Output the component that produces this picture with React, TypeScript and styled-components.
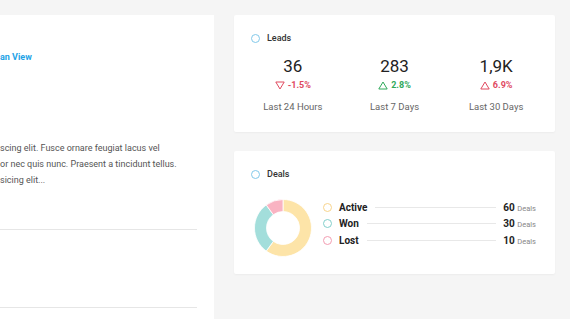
import styled, { createGlobalStyle } from "styled-components";

const GlobalStyle = createGlobalStyle`
  html, body {
    margin: 0;
    padding: 0;
    background: #f5f5f5;
    font-family: Roboto, "Liberation Sans", Arial, sans-serif;
    overflow: hidden;
  }
`;

type Trend = "up" | "down";

const leads = [
  { value: "36", change: "-1.5%", trend: "down" as Trend, color: "#e04a5f", label: "Last 24 Hours" },
  { value: "283", change: "2.8%", trend: "up" as Trend, color: "#2fa95a", label: "Last 7 Days" },
  { value: "1,9K", change: "6.9%", trend: "up" as Trend, color: "#e04a5f", label: "Last 30 Days" },
];

const deals = [
  { name: "Active", count: 60, fill: "#fde4a8", ring: "#f8d48c" },
  { name: "Won", count: 30, fill: "#a3dedb", ring: "#82cfcc" },
  { name: "Lost", count: 10, fill: "#f9b3c2", ring: "#f39db2" },
];

const polar = (cx: number, cy: number, r: number, deg: number) => {
  const a = ((deg - 90) * Math.PI) / 180;
  return [cx + r * Math.cos(a), cy + r * Math.sin(a)];
};

const arcPath = (start: number, end: number, ro: number, ri: number) => {
  const c = 30;
  const [x1, y1] = polar(c, c, ro, start);
  const [x2, y2] = polar(c, c, ro, end);
  const [x3, y3] = polar(c, c, ri, end);
  const [x4, y4] = polar(c, c, ri, start);
  const large = end - start > 180 ? 1 : 0;
  return `M${x1} ${y1} A${ro} ${ro} 0 ${large} 1 ${x2} ${y2} L${x3} ${y3} A${ri} ${ri} 0 ${large} 0 ${x4} ${y4} Z`;
};

const Donut = () => {
  const total = deals.reduce((s, d) => s + d.count, 0);
  let angle = 0;
  return (
    <svg width="60" height="60" viewBox="0 0 60 60">
      {deals.map((d) => {
        const start = angle;
        angle += (d.count / total) * 360;
        return (
          <path
            key={d.name}
            d={arcPath(start, angle, 28.5, 16.5)}
            fill={d.fill}
            stroke="#fff"
            strokeWidth="0.8"
          />
        );
      })}
    </svg>
  );
};

const TrendIcon = ({ trend, color }: { trend: Trend; color: string }) => (
  <svg width="10" height="9" viewBox="0 0 10 9">
    {trend === "up" ? (
      <path d="M5 1 L9.2 8 L0.8 8 Z" fill="none" stroke={color} strokeWidth="1" strokeLinejoin="round" />
    ) : (
      <path d="M0.8 1 L9.2 1 L5 8 Z" fill="none" stroke={color} strokeWidth="1" strokeLinejoin="round" />
    )}
  </svg>
);

const App = () => {
  return (
    <>
      <GlobalStyle />
      <Page>
        <LeftCard>
          <ViewLink>an View</ViewLink>
          <Excerpt>
            scing elit. Fusce ornare feugiat lacus vel
            <br />
            or nec quis nunc. Praesent a tincidunt tellus.
            <br />
            sicing elit...
          </Excerpt>
          <Divider />
          <Spacer />
          <Divider />
        </LeftCard>

        <RightColumn>
          <Card>
            <CardTitle>
              <Ring $color="#82c9ea" />
              Leads
            </CardTitle>
            <Stats>
              {leads.map((l) => (
                <Stat key={l.label}>
                  <StatValue>{l.value}</StatValue>
                  <StatChange $color={l.color}>
                    <TrendIcon trend={l.trend} color={l.color} />
                    {l.change}
                  </StatChange>
                  <StatLabel>{l.label}</StatLabel>
                </Stat>
              ))}
            </Stats>
          </Card>

          <Card $bottom={16}>
            <CardTitle>
              <Ring $color="#82c9ea" />
              Deals
            </CardTitle>
            <DealsBody>
              <Donut />
              <Legend>
                {deals.map((d) => (
                  <LegendRow key={d.name}>
                    <Ring $color={d.ring} />
                    <LegendName>{d.name}</LegendName>
                    <LegendLine />
                    <LegendCount>
                      {d.count} <small>Deals</small>
                    </LegendCount>
                  </LegendRow>
                ))}
              </Legend>
            </DealsBody>
          </Card>
        </RightColumn>
      </Page>
    </>
  );
};

export default App;

const Page = styled.div`
  display: grid;
  grid-template-columns: 214px 321px;
  column-gap: 20px;
  padding: 15px 15px 0 0;
  height: 319px;
  box-sizing: border-box;
`;

const LeftCard = styled.div`
  background: #fff;
  padding: 34px 17px 0 0;
  display: flex;
  flex-direction: column;
  min-height: 330px;
`;

const ViewLink = styled.a`
  color: #1fa3e6;
  font-size: 9px;
  font-weight: 700;
  line-height: 16px;
`;

const Excerpt = styled.p`
  margin: 75px 0 0;
  font-size: 9px;
  line-height: 16px;
  color: #555;
  white-space: nowrap;
`;

const Divider = styled.div`
  height: 1px;
  background: #e6e6e6;
  margin-top: 41px;
`;

const Spacer = styled.div`
  height: 36px;
`;

const RightColumn = styled.div`
  display: flex;
  flex-direction: column;
  gap: 19px;
`;

const Card = styled.div<{ $bottom?: number }>`
  background: #fff;
  border-radius: 2px;
  box-shadow: 0 1px 2px rgba(0, 0, 0, 0.04);
  padding: 18px 0 ${(p) => p.$bottom ?? 19}px;
`;

const CardTitle = styled.div`
  display: flex;
  align-items: center;
  gap: 7px;
  padding: 0 17px;
  font-size: 9px;
  font-weight: 500;
  color: #333;
  line-height: 10px;
`;

const Ring = styled.span<{ $color: string }>`
  width: 9px;
  height: 9px;
  border-radius: 50%;
  border: 1.2px solid ${(p) => p.$color};
  box-sizing: border-box;
  flex-shrink: 0;
`;

const Stats = styled.div`
  display: grid;
  grid-template-columns: repeat(3, 1fr);
  padding: 13px 8px 0;
`;

const Stat = styled.div`
  display: flex;
  flex-direction: column;
  align-items: center;
`;

const StatValue = styled.div`
  font-size: 17px;
  color: #222;
  line-height: 20px;
`;

const StatChange = styled.div<{ $color: string }>`
  display: flex;
  align-items: center;
  gap: 3px;
  font-size: 9px;
  font-weight: 700;
  color: ${(p) => p.$color};
  line-height: 12px;
  margin-top: 3px;
`;

const StatLabel = styled.div`
  font-size: 9.5px;
  color: #666;
  margin-top: 10px;
  line-height: 12px;
`;

const DealsBody = styled.div`
  display: flex;
  align-items: center;
  gap: 10px;
  padding: 19px 19px 0 19px;
`;

const Legend = styled.div`
  flex: 1;
  display: flex;
  flex-direction: column;
  gap: 4.5px;
  margin-bottom: 9px;
`;

const LegendRow = styled.div`
  display: flex;
  align-items: center;
  gap: 7px;
  height: 12px;
`;

const LegendName = styled.span`
  font-size: 10px;
  font-weight: 700;
  color: #222;
`;

const LegendLine = styled.span`
  flex: 1;
  height: 1px;
  background: #e8e8e8;
  margin: 0 0 0 1px;
`;

const LegendCount = styled.span`
  font-size: 10px;
  font-weight: 700;
  color: #222;

  small {
    font-size: 7.5px;
    font-weight: 400;
    color: #888;
  }
`;
